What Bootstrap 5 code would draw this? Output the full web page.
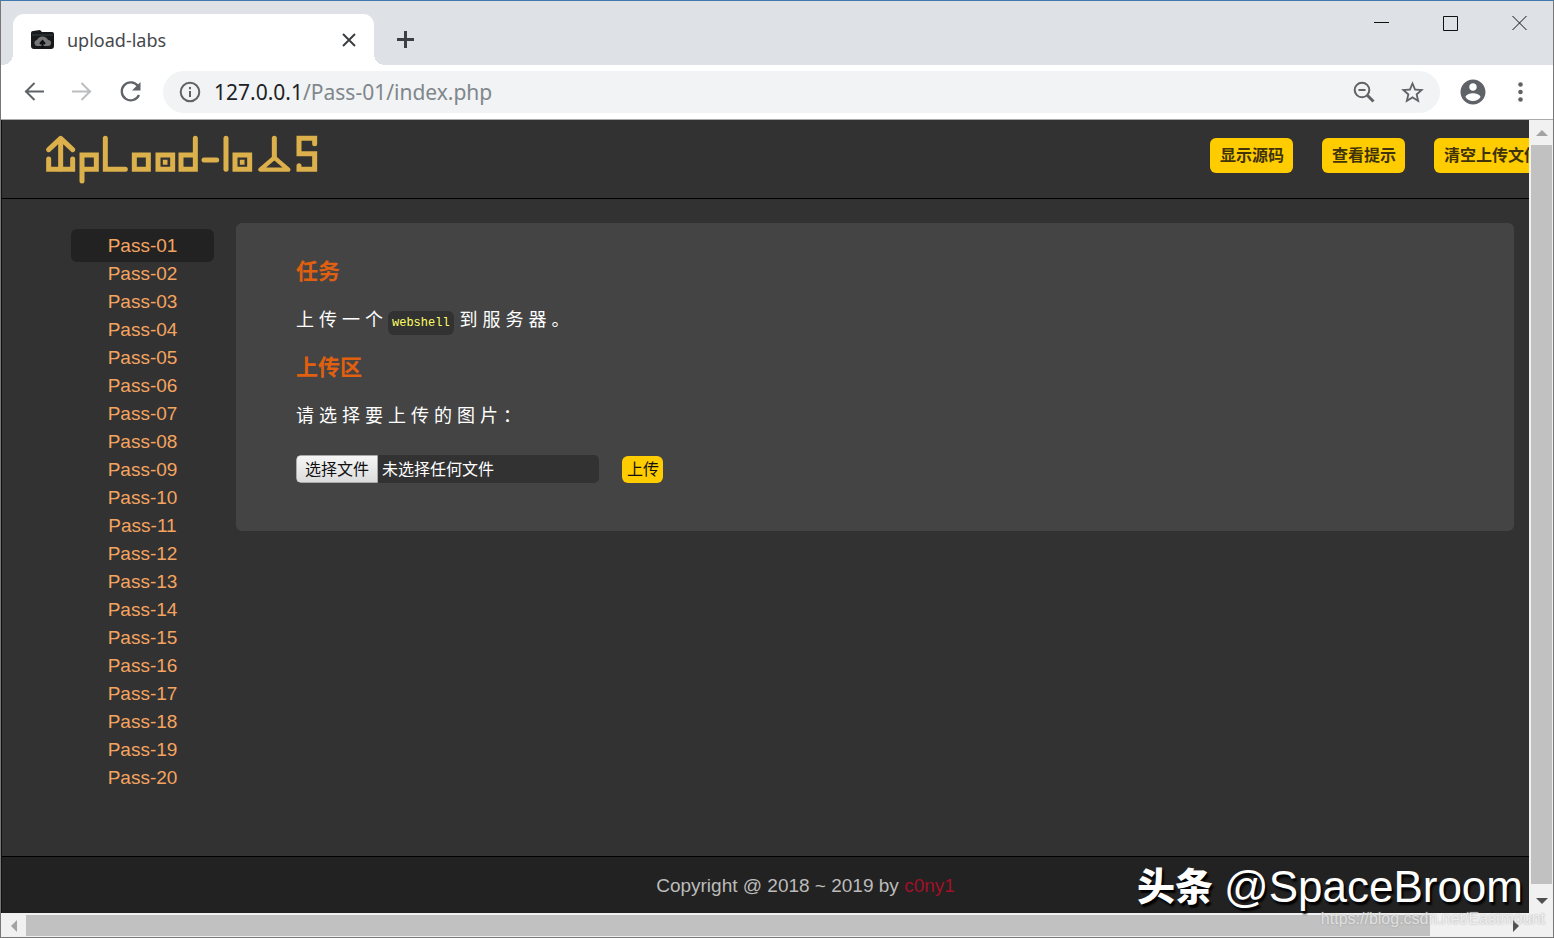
<!DOCTYPE html>
<html lang="zh-CN">
<head>
<meta charset="utf-8">
<meta name="viewport" content="width=device-width, initial-scale=1">
<title>upload-labs</title>
<link href="https://cdn.jsdelivr.net/npm/bootstrap@5.3.0/dist/css/bootstrap.min.css" rel="stylesheet">
<style>
  body { background: #323232; font-family: "Liberation Sans", "Noto Sans CJK SC", sans-serif; }
  svg { display: block; }
  .browser { border: 1px solid #777; border-top-color: #3f79ad; }
  .plain-btn { background: none; border: 0; padding: 0; color: #5f6368; }

  /* tab strip */
  .tab-strip { background: #dee1e6; height: 64px; padding-left: 12px; }
  .tab-item { background: #fff; width: 361px; height: 51px; border-radius: 11px 11px 0 0; padding: 0 18px 0 17px; font: 18px "Noto Sans", sans-serif; color: #45484c; }
  .tab-item::before, .tab-item::after { content: ""; position: absolute; bottom: 0; width: 11px; height: 11px; }
  .tab-item::before { right: 100%; background: radial-gradient(circle at 0 0, transparent 11px, #fff 11px); }
  .tab-item::after { left: 100%; background: radial-gradient(circle at 100% 0, transparent 11px, #fff 11px); }
  .new-tab { margin-left: 22px; height: 51px; color: #3c4043; }
  .window-keys { gap: 52px; padding: 13px 25px 0 0; }
  .window-keys .plain-btn { color: #111; }

  /* toolbar */
  .toolbar { background: #fff; height: 55px; border-bottom: 1px solid #aaa; gap: 24px; padding: 0 20px; }
  .omnibox { background: #f1f3f4; height: 42px; border-radius: 21px; padding: 0 15px; margin-left: -5px; margin-right: -6px; font: 21px "Noto Sans", sans-serif; color: #80868b; }
  .omnibox b { font-weight: 400; color: #202124; }
  .account { margin-right: -4px; }

  /* site */
  .viewport-pane { min-width: 0; overflow: hidden; background: #323232; border-left: 1px solid #111; }
  .site { width: calc(100% + 80px); }
  .site-head { height: 79px; border-bottom: 1px solid #000; padding: 15px 60px 0 43px; }
  .head-btns { gap: 29px; padding-top: 3px; }
  .gold { background: #fc0; color: #40330a; border: 0; border-radius: 6px; }
  .gold-lg { height: 35px; padding: 1px 9px 0 10px; font-size: 16px; font-weight: 700; }
  .site-body { padding: 24px 95px 0 69px; gap: 22px; }
  .pass-list { width: 143px; padding-top: 9px; font-size: 19px; line-height: 28px; }
  .pass-list a { color: #f4a460; text-decoration: none; text-align: center; }
  .pass-list a.current { background: #222; border-radius: 6px; margin: -3px 0 -2px; padding: 3px 0 2px; }
  .panel { background: #444; border-radius: 6px; padding: 35px 60px 48px; color: #fff; }
  .panel h2 { color: #e0600f; font-size: 22px; font-weight: 700; line-height: 28px; margin: 0 0 20px; }
  .panel p { font-size: 18px; line-height: 28px; margin: 0 0 20px; letter-spacing: 5px; }
  .panel code { background: #323232; color: #ff6; border-radius: 6px; padding: 5px 4px; margin-right: 6px; font: 12px "Liberation Mono", monospace; letter-spacing: 0; }
  .upload-form { gap: 23px; padding-top: 5px; font-size: 16px; }
  .file-box { width: 303px; height: 28px; border-radius: 5px; background: #323232; overflow: hidden; }
  .file-box span { padding-top: 1px; }
  .file-key { background: linear-gradient(#f6f6f6, #dcdcdc); color: #111; border: 1px solid #aaa; border-radius: 4px 0 0 4px; padding: 0 8px; margin-right: 4px; }
  .gold-sm { height: 27px; padding: 1px 4px 0 5px; color: #111; }
  .site-foot { background: #222; color: #bbb; border-top: 1px solid #000; height: 57px; padding-top: 3px; font-size: 19px; }
  .site-foot a { color: #a01128; text-decoration: none; }

  /* scroll bars */
  .bar-v { width: 24px; background: #f1f1f1; padding: 0 1px 0 2px; }
  .bar-h { height: 24px; background: #f1f1f1; padding: 2px 0 1px; }
  .thumb { background: #c1c1c1; }
  .bar-end { width: 25px; height: 25px; flex: none; display: flex; align-items: center; justify-content: center; }
  .bar-v .bar-end { width: 21px; }
  .bar-h .bar-end { height: 21px; }
  .bar-space-v { height: 4px; }
  .bar-space-h { width: 73px; }

  /* stamps over the window */
  .stamp { right: 30px; bottom: 24px; gap: 11px; color: #fff; font-size: 44px; line-height: 52px; text-shadow: 2px 3px 2px #000; pointer-events: none; }
  .stamp strong { font-size: 38px; font-weight: 900; }
  .stamp-url { right: 8px; bottom: 7px; font-size: 16px; line-height: 22px; color: #eee; opacity: .7; text-shadow: 0 0 2px #888; pointer-events: none; }
</style>
</head>
<body>
<div class="browser d-flex flex-column min-vh-100 position-relative">
  <div class="tab-strip d-flex">
    <div class="tab-item d-flex align-items-center align-self-end position-relative">
      <svg width="25" height="20" viewBox="0 0 25 20" aria-hidden="true"><path d="M1 3Q1 1 3 1L10 0 12 2H22Q24 2 24 4V16Q24 19 21 19H4Q1 19 1 16Z" fill="#17191a"/><path d="M2 5H23" stroke="#394044"/><path d="M9 16H8a3 3 0 0 1-1-6 6 6 0 0 1 11 0 3 3 0 0 1 0 6h-2" fill="#777"/><path d="M12.500 18V12M10 14l2.500-3 2.500 3" stroke="#111" stroke-width="2" fill="none"/></svg>
      <span class="flex-grow-1 ms-2 ps-1">upload-labs</span>
      <button class="plain-btn" type="button" aria-label="关闭标签页"><svg width="14" height="14" viewBox="0 0 14 14" stroke="#3c4043" stroke-width="2"><path d="M1 1 13 13M13 1 1 13"/></svg></button>
    </div>
    <button class="plain-btn new-tab align-self-end" type="button" aria-label="新标签页"><svg width="19" height="19" viewBox="0 0 19 19" stroke="currentColor" stroke-width="3"><path d="M9.500 1V18M1 9.500H18"/></svg></button>
    <div class="window-keys d-flex align-items-start ms-auto">
      <button class="plain-btn" type="button" aria-label="最小化"><svg width="17" height="17" viewBox="0 0 17 17" stroke="currentColor"><path d="M1 8.500H16"/></svg></button>
      <button class="plain-btn" type="button" aria-label="最大化"><svg width="17" height="17" viewBox="0 0 17 17" stroke="currentColor" fill="none"><path d="M1.500 2.500H15.500V16.500H1.500Z"/></svg></button>
      <button class="plain-btn" type="button" aria-label="关闭"><svg width="17" height="17" viewBox="0 0 17 17" stroke="currentColor"><path d="M1.500 2 15.500 16M15.500 2 1.500 16"/></svg></button>
    </div>
  </div>

  <div class="toolbar d-flex align-items-center">
    <button class="plain-btn" type="button" aria-label="后退"><svg width="25" height="24" viewBox="0 0 25 24" stroke="currentColor" stroke-width="2" fill="none"><path d="M23 11.500H4M13.500 3 5 11.500 13.500 20"/></svg></button>
    <button class="plain-btn" type="button" aria-label="前进"><svg width="24" height="24" viewBox="0 0 24 24" stroke="#bbbdbf" stroke-width="2" fill="none"><path d="M2 11.500H21M11.500 3 20 11.500 11.500 20"/></svg></button>
    <button class="plain-btn" type="button" aria-label="重新加载"><svg width="26" height="24" viewBox="0 0 26 24"><path d="M20 6A9 9 0 1 0 21 15" fill="none" stroke="currentColor" stroke-width="2.300"/><path d="M22.500 2V10.500H14Z" fill="currentColor"/></svg></button>
    <div class="omnibox d-flex align-items-center flex-grow-1">
      <svg width="24" height="24" viewBox="0 0 24 24" aria-hidden="true"><circle cx="12" cy="12" r="9.300" fill="none" stroke="#5f6368" stroke-width="2"/><path d="M12 11V17M12 7V9.200" stroke="#5f6368" stroke-width="2"/></svg>
      <span class="flex-grow-1 ms-2 ps-1" role="textbox" aria-label="地址"><b>127.0.0.1</b>/Pass-01/index.php</span>
      <button class="plain-btn me-4" type="button" aria-label="缩放"><svg width="24" height="24" viewBox="0 0 24 24" fill="none" stroke="currentColor"><circle cx="10" cy="10" r="7.300" stroke-width="2"/><path d="M15 15 21.500 21.500" stroke-width="3"/><path d="M6.500 10H13.500" stroke-width="2"/></svg></button>
      <button class="plain-btn" type="button" aria-label="收藏"><svg width="25" height="25" viewBox="1 1 22 22" fill="currentColor"><path d="M22 9.240l-7.190-.62L12 2 9.190 8.630 2 9.240l5.460 4.730L5.820 21 12 17.270 18.180 21l-1.630-7.030L22 9.240zM12 15.400l-3.760 2.270 1-4.280-3.320-2.880 4.380-.38L12 6.100l1.710 4.040 4.380.38-3.320 2.880 1 4.280L12 15.400z"/></svg></button>
    </div>
    <button class="plain-btn account" type="button" aria-label="账户"><svg width="30" height="30" viewBox="0 0 24 24" fill="currentColor"><path d="M12 2C6.480 2 2 6.480 2 12s4.480 10 10 10 10-4.480 10-10S17.520 2 12 2zm0 3c1.660 0 3 1.340 3 3s-1.340 3-3 3-3-1.340-3-3 1.340-3 3-3zm0 14.200c-2.500 0-4.710-1.280-6-3.220.03-1.990 4-3.080 6-3.080 1.990 0 5.970 1.090 6 3.080-1.290 1.940-3.500 3.220-6 3.220z"/></svg></button>
    <button class="plain-btn" type="button" aria-label="菜单"><svg width="25" height="24" viewBox="0 0 25 24" fill="currentColor"><circle cx="12.500" cy="4.500" r="2.300"/><circle cx="12.500" cy="12" r="2.300"/><circle cx="12.500" cy="19.500" r="2.300"/></svg></button>
  </div>

  <div class="d-flex flex-grow-1">
    <div class="viewport-pane d-flex flex-grow-1">
      <div class="site d-flex flex-column flex-shrink-0">
        <header class="site-head d-flex justify-content-between align-items-start">
          <a href="#" aria-label="upload-labs">
            <svg width="275" height="50" viewBox="43 30 825 150" fill="none" stroke="#dcb04a" stroke-width="15" stroke-linecap="round" stroke-linejoin="miter">
              <path d="M90 46V132M54 74 90 40 126 74" stroke-linejoin="round"/>
              <path d="M54 102V133H126V102"/>
              <path d="M154 168V90H197V133H156"/>
              <path d="M224 40V133H284"/>
              <path d="M311 90H353V133H311Z"/>
              <path d="M382 90H426V133H382Z"/>
              <path d="M494 40V133H451V90H492"/>
              <path d="M520 105H558"/>
              <path d="M586 40V133"/>
              <path d="M613 90H657V133H613Z"/>
              <path d="M731 40V98"/>
              <path d="M731 98 689 134H773Z" stroke-width="13" stroke-linejoin="round"/>
              <path d="M852 56V40H805V86H852V133H805V122"/>
              <path d="M399 107H408V117H399ZM630 107H639V117H630Z" fill="#dcb04a" stroke-width="5"/>
            </svg>
          </a>
          <div class="head-btns d-flex">
            <button class="gold gold-lg" type="button">显示源码</button>
            <button class="gold gold-lg" type="button">查看提示</button>
            <button class="gold gold-lg" type="button">清空上传文件</button>
          </div>
        </header>
        <div class="site-body d-flex align-items-start flex-grow-1">
          <nav class="flex-shrink-0" aria-label="关卡">
            <ul class="pass-list list-unstyled mb-0">
              <li><a class="current d-block" href="#">Pass-01</a></li>
              <li><a class="d-block" href="#">Pass-02</a></li>
              <li><a class="d-block" href="#">Pass-03</a></li>
              <li><a class="d-block" href="#">Pass-04</a></li>
              <li><a class="d-block" href="#">Pass-05</a></li>
              <li><a class="d-block" href="#">Pass-06</a></li>
              <li><a class="d-block" href="#">Pass-07</a></li>
              <li><a class="d-block" href="#">Pass-08</a></li>
              <li><a class="d-block" href="#">Pass-09</a></li>
              <li><a class="d-block" href="#">Pass-10</a></li>
              <li><a class="d-block" href="#">Pass-11</a></li>
              <li><a class="d-block" href="#">Pass-12</a></li>
              <li><a class="d-block" href="#">Pass-13</a></li>
              <li><a class="d-block" href="#">Pass-14</a></li>
              <li><a class="d-block" href="#">Pass-15</a></li>
              <li><a class="d-block" href="#">Pass-16</a></li>
              <li><a class="d-block" href="#">Pass-17</a></li>
              <li><a class="d-block" href="#">Pass-18</a></li>
              <li><a class="d-block" href="#">Pass-19</a></li>
              <li><a class="d-block" href="#">Pass-20</a></li>
            </ul>
          </nav>
          <main class="panel flex-grow-1">
            <h2>任务</h2>
            <p>上传一个<code>webshell</code>到服务器。</p>
            <h2>上传区</h2>
            <p>请选择要上传的图片：</p>
            <form class="upload-form d-flex align-items-center">
              <label class="file-box d-flex align-items-stretch position-relative" for="upload-file">
                <span class="file-key d-flex align-items-center">选择文件</span>
                <span class="d-flex align-items-center">未选择任何文件</span>
                <input class="position-absolute top-0 start-0 w-100 h-100 opacity-0" type="file" id="upload-file">
              </label>
              <button class="gold gold-sm" type="submit">上传</button>
            </form>
          </main>
        </div>
        <footer class="site-foot d-flex align-items-center justify-content-center">
          <span>Copyright @ 2018 ~ 2019 by <a href="#">c0ny1</a></span>
        </footer>
      </div>
    </div>
    <div class="bar-v d-flex flex-column flex-shrink-0" aria-hidden="true">
      <div class="bar-end"><svg width="12" height="6"><path d="M0 6 6 0 12 6Z" fill="#a3a3a3"/></svg></div>
      <div class="thumb flex-grow-1"></div>
      <div class="bar-space-v"></div>
      <div class="bar-end"><svg width="12" height="6"><path d="M0 0 6 6 12 0Z" fill="#505050"/></svg></div>
    </div>
  </div>
  <div class="bar-h d-flex" aria-hidden="true">
    <div class="bar-end"><svg width="6" height="12"><path d="M6 0 0 6 6 12Z" fill="#a3a3a3"/></svg></div>
    <div class="thumb flex-grow-1"></div>
    <div class="bar-space-h"></div>
    <div class="bar-end"><svg width="6" height="12"><path d="M0 0 6 6 0 12Z" fill="#505050"/></svg></div>
    <div class="bar-end"></div>
  </div>

  <div class="stamp position-absolute d-flex align-items-center"><strong>头条</strong><span>@SpaceBroom</span></div>
  <div class="stamp-url position-absolute">https://blog.csdn.net/Eastmount</div>
</div>
<script src="https://cdn.jsdelivr.net/npm/bootstrap@5.3.0/dist/js/bootstrap.bundle.min.js"></script>
</body>
</html>
